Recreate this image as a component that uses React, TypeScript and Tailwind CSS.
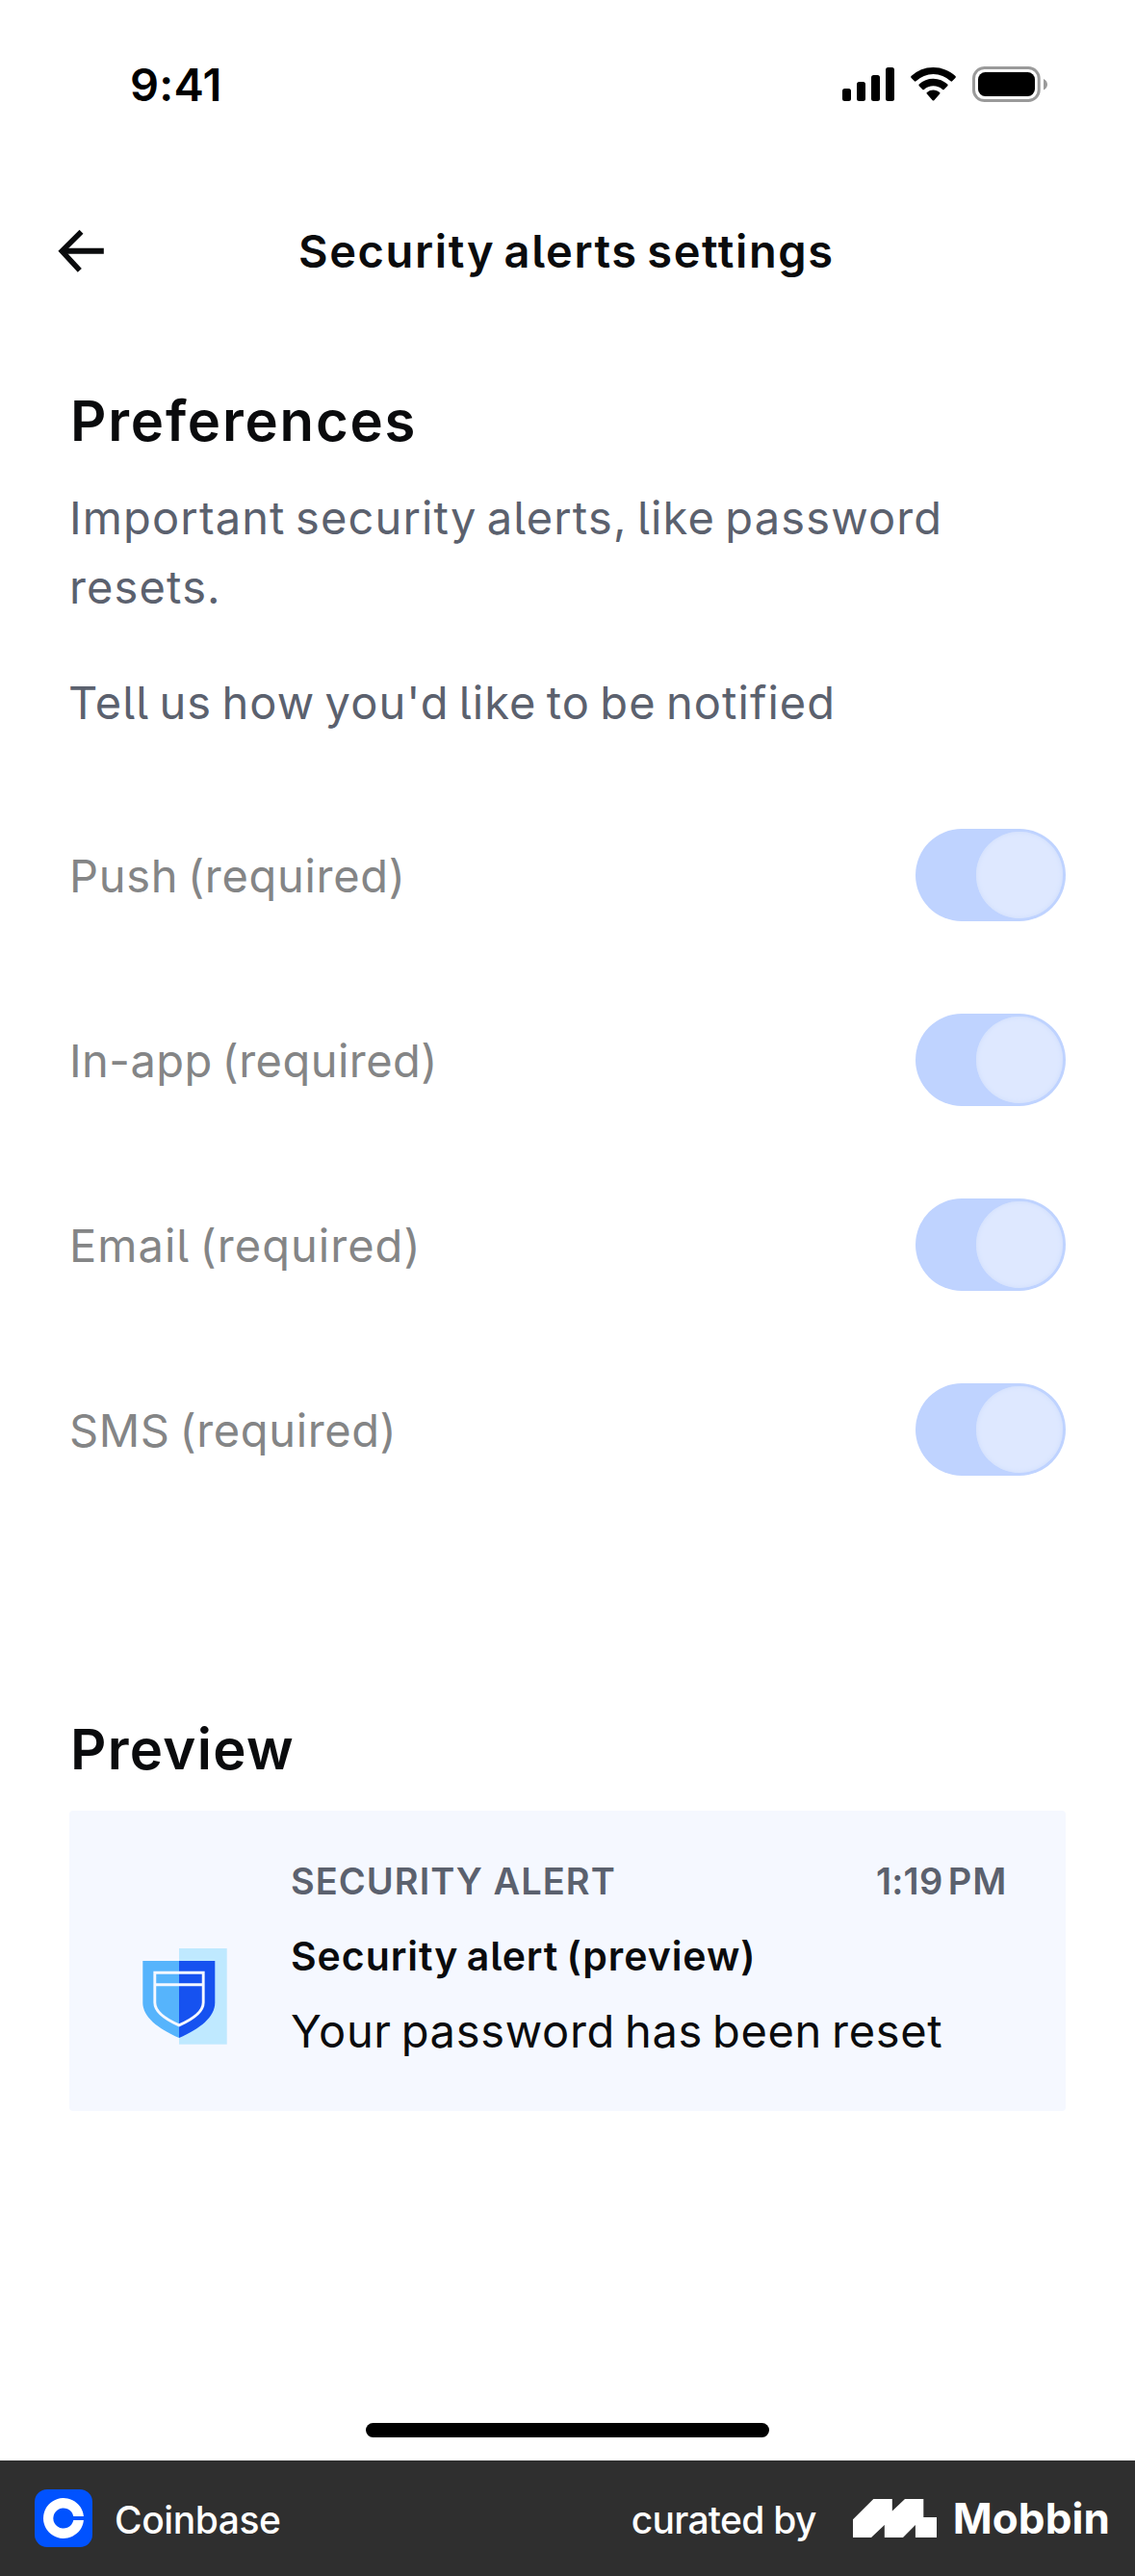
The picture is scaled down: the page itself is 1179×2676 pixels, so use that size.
function SignalIcon() {
  return (
    <svg className="h-[60px] w-[54px]" viewBox="875 57 54 60">
      <rect x="875" y="92" width="9" height="13" rx="2.5" />
      <rect x="890" y="85" width="9" height="20" rx="2.5" />
      <rect x="905" y="78" width="9" height="27" rx="2.5" />
      <rect x="920" y="70" width="9" height="35" rx="2.5" />
    </svg>
  );
}

function WifiIcon() {
  return (
    <svg className="ml-[17px] h-[60px] w-[47px]" viewBox="946 57 47 60">
      <path d="M969.5 70c8.8 0 16.900 3.400 23 9.100.500.500.500 1.100.100 1.600l-3.500 3.600c-.400.400-1.100.500-1.600 0a26 26 0 0 0-36 0c-.500.500-1.200.400-1.600 0l-3.500-3.600c-.400-.500-.400-1.100.100-1.600A33.400 33.400 0 0 1 969.500 70z" />
      <path d="M969.500 81.800c5.700 0 10.900 2.200 14.800 5.800.500.500.500 1.100 0 1.600l-3.700 3.700c-.400.400-1 .400-1.500 0a14.200 14.200 0 0 0-19.200 0c-.500.400-1.100.400-1.500 0l-3.700-3.700c-.500-.500-.500-1.100 0-1.600a21.700 21.700 0 0 1 14.800-5.800z" />
      <path d="M969.500 93.600c2.500 0 4.800.900 6.600 2.400.500.400.500 1 .100 1.500l-5.900 6.700c-.500.500-1.100.500-1.600 0l-5.900-6.700c-.400-.500-.400-1.100.100-1.500a10.200 10.200 0 0 1 6.600-2.400z" />
    </svg>
  );
}

function BatteryIcon() {
  return (
    <svg className="ml-[17px] h-[60px] w-[78px]" viewBox="1010 57 78 60">
      <rect x="1011.500" y="70.500" width="67.700" height="34" rx="11" fill="none" stroke="#9a9a9a" strokeWidth="3" />
      <rect x="1016" y="75" width="59" height="25" rx="7.500" />
      <path d="M1084 82v11.400c2.400-1 4-3.200 4-5.700s-1.600-4.700-4-5.700z" fill="#9a9a9a" />
    </svg>
  );
}

function BackArrow() {
  return (
    <svg className="h-[48px] w-[48px]" viewBox="60 237 48 48" fill="none" stroke="#0a0b0d">
      <path d="M107.800 260.700H64" strokeWidth="6" />
      <path d="M84.500 240.800L64.300 260.800L82.800 280.900" strokeWidth="5.600" />
    </svg>
  );
}

function ShieldIcon() {
  return (
    <svg className="mt-[143px] h-[100px] w-[88px]" viewBox="148 2024 88 100">
      <rect x="186" y="2024" width="49.700" height="99.700" fill="#bfe9ff" />
      <path d="M148.300 2037H186v80c-22-9.500-37.700-22-37.700-36.500z" fill="#56b4fc" />
      <path d="M186 2037h37.300v43.500c0 14.500-15.300 27-37.300 36.500z" fill="#1652f0" />
      <path
        d="M160.800 2049.200h50.400v31c0 9.300-9.700 16.800-25.200 23.600c-15.500-6.800-25.200-14.300-25.200-23.600zM160.800 2061.800h50.400"
        fill="none"
        stroke="#f5f8ff"
        strokeWidth="2.900"
      />
    </svg>
  );
}

function CoinbaseIcon() {
  return (
    <svg className="h-[60px] w-[60px]" viewBox="0 0 60 60">
      <rect width="60" height="60" rx="13" fill="#0052ff" />
      <path
        d="M40.300 28H50.900A21 21 0 1 0 50.900 32H40.300A10.600 10.600 0 1 1 40.300 28z"
        fill="#fff"
      />
    </svg>
  );
}

function MobbinIcon() {
  return (
    <svg className="h-[40px] w-[87px]" viewBox="886 2596 87 40" fill="#fff">
      <path d="M886 2617.300L907.300 2596H926.800V2608.600L940 2596H959.300V2615H973V2636H950.900V2623L938 2636H918.800V2623L905 2636H886z" />
    </svg>
  );
}

function Toggle() {
  return (
    <div className="flex h-[96px] w-[156px] items-center justify-end rounded-full bg-[#bfd3ff] pr-[3px]">
      <div className="h-[90px] w-[90px] rounded-full bg-[#dee8ff] shadow-[inset_0_0_4px_1px_#d3e0fc]" />
    </div>
  );
}

const channels = [
  { label: "Push (required)", tracking: "tracking-[0.683px]" },
  { label: "In-app (required)", tracking: "tracking-[0.476px]" },
  { label: "Email (required)", tracking: "tracking-[1.038px]" },
  { label: "SMS (required)", tracking: "tracking-[0.624px]" },
];

export default function App() {
  return (
    <div className="flex h-[2676px] w-[1179px] flex-col bg-white font-['Inter',sans-serif] whitespace-nowrap text-[#0a0b0d] [font-feature-settings:'cv05']">
      <div className="flex h-[117px] items-start justify-between pt-[57px] pr-[91px] pl-[135px] text-black">
        <span className="pt-px text-[47px] leading-[60px] font-semibold tracking-[0.18px]">9:41</span>
        <div className="flex">
          <SignalIcon />
          <WifiIcon />
          <BatteryIcon />
        </div>
      </div>

      <header className="mt-[114px] flex h-[60px] items-center pl-[60px]">
        <BackArrow />
        <h1 className="ml-[202px] text-[47px] leading-[60px] font-semibold tracking-[1.62px] [word-spacing:-4px]">
          Security alerts settings
        </h1>
      </header>

      <main className="px-[72px]">
        <section>
          <h2 className="mt-[111px] ml-px text-[58px] leading-[70px] font-semibold tracking-[1.807px]">Preferences</h2>
          <p className="mt-[30px] text-[47px] leading-[72px] tracking-[1.142px] text-[#5b616e] [word-spacing:-4px]">
            Important security alerts, like password
            <br />
            resets.
          </p>
          <p className="mt-[48px] -ml-px text-[47px] leading-[72px] tracking-[1.065px] text-[#5b616e] [word-spacing:-4px]">
            Tell us how you'd like to be notified
          </p>
          <ul className="mt-[47px]">
            {channels.map((c) => (
              <li key={c.label} className="flex h-[192px] items-center justify-between">
                <span className={`pt-[2px] text-[47px] leading-[60px] text-[#848586] [word-spacing:-4px] ${c.tracking}`}>
                  {c.label}
                </span>
                <Toggle />
              </li>
            ))}
          </ul>
        </section>

        <section>
          <h2 className="mt-[201px] ml-px text-[58px] leading-[70px] font-semibold tracking-[1.313px]">Preview</h2>
          <div className="mt-[29px] flex h-[312px] items-start rounded-[4px] bg-[#f5f8ff] pr-[61px] pl-[76px]">
            <ShieldIcon />
            <div className="ml-[66px] flex-1 pt-[49px]">
              <div className="flex justify-between text-[38px] leading-[48px] font-semibold text-[#5b616e]">
                <span className="tracking-[1.04px]">SECURITY ALERT</span>
                <span className="tracking-[0.25px] [word-spacing:-4.500px]">
                  1:19 <span className="tracking-[0.8px]">PM</span>
                </span>
              </div>
              <div className="mt-[24px] text-[41px] leading-[60px] font-semibold tracking-[0.958px] [word-spacing:-3px]">
                Security alert (preview)
              </div>
              <div className="mt-[18px] text-[47px] leading-[60px] tracking-[0.7px] [word-spacing:-4px]">
                Your password has been reset
              </div>
            </div>
          </div>
        </section>
      </main>

      <div className="mx-auto mt-auto mb-[24px] h-[15px] w-[419px] rounded-full bg-black" />

      <footer className="flex h-[120px] items-center justify-between bg-[#2f2f2f] pr-[26px] pl-[36px] text-white">
        <div className="flex items-center">
          <CoinbaseIcon />
          <span className="ml-[23px] pt-[4px] text-[39px] leading-[60px] font-medium tracking-[-0.442px]">Coinbase</span>
        </div>
        <div className="flex items-center">
          <span className="pt-[4px] text-[39px] leading-[60px] font-medium tracking-[-0.723px]">curated by</span>
          <span className="ml-[38px]">
            <MobbinIcon />
          </span>
          <span className="ml-[17px] text-[44px] leading-[60px] font-bold tracking-[0.100px]">Mobbin</span>
        </div>
      </footer>
    </div>
  );
}
